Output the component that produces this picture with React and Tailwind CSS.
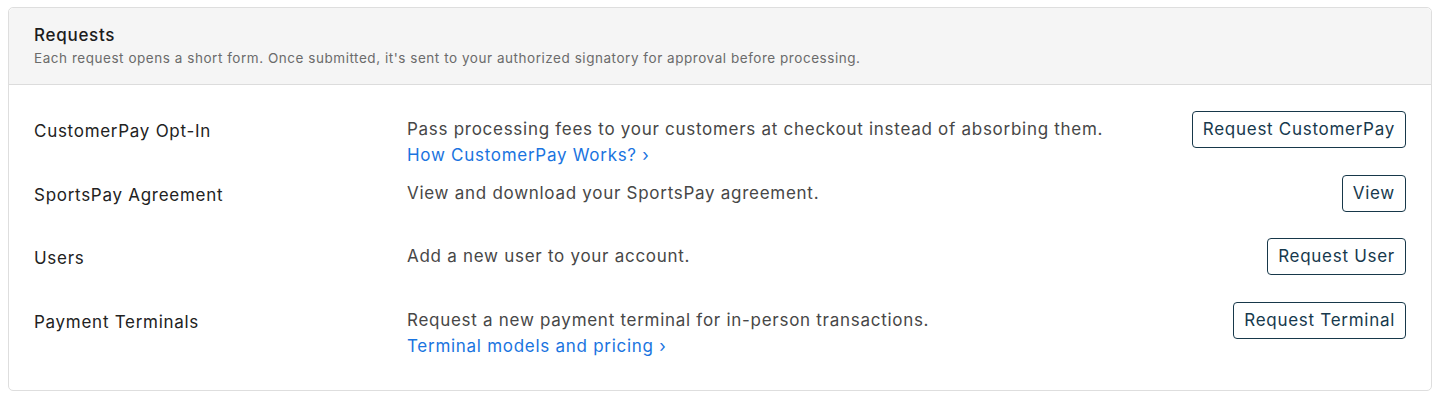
const requests = [
  {
    label: 'CustomerPay Opt-In',
    description: 'Pass processing fees to your customers at checkout instead of absorbing them.',
    link: 'How CustomerPay Works?',
    action: 'Request CustomerPay',
  },
  {
    label: 'SportsPay Agreement',
    description: 'View and download your SportsPay agreement.',
    action: 'View',
  },
  {
    label: 'Users',
    description: 'Add a new user to your account.',
    action: 'Request User',
  },
  {
    label: 'Payment Terminals',
    description: 'Request a new payment terminal for in-person transactions.',
    link: 'Terminal models and pricing',
    action: 'Request Terminal',
  },
];

export default function App() {
  return (
    <div className="min-h-screen bg-white pl-2 pr-[13px] pt-[7px] font-['Inter',sans-serif] tracking-[0.045em]">
      <div className="rounded-[5px] border border-[#dedede] bg-white">
        {/* Header */}
        <div className="rounded-t-[5px] border-b border-[#dcdcdc] bg-[#f5f5f5] px-[25px] pt-[15px] pb-[16px]">
          <h2 className="text-[17px] leading-6 font-medium text-[#1c1c1c]">Requests</h2>
          <p className="mt-px text-[13.5px] leading-5 text-[#6b6b6b] tracking-[0.04em]">
            Each request opens a short form. Once submitted, it's sent to your authorized signatory for approval before processing.
          </p>
        </div>

        {/* Rows */}
        <div className="px-[25px] pt-[26px] pb-[25px]">
          {requests.map((req) => (
            <div key={req.label} className="grid min-h-[63.5px] grid-cols-[373px_1fr_auto] items-start">
              <div className="pt-[7px] text-[17px] leading-[26px] text-[#222222]">{req.label}</div>
              <div className="pt-[5px] text-[17px] leading-[26px] text-[#474747]">
                <p>{req.description}</p>
                {req.link && (
                  <a href="#" className="block text-[#1a74e0]">
                    {req.link} ›
                  </a>
                )}
              </div>
              <button className="h-[37px] rounded-[4px] border border-[#17384a] px-[10px] text-[17px] leading-none text-[#17394d] hover:bg-[#f2f6f8]">
                {req.action}
              </button>
            </div>
          ))}
        </div>
      </div>
    </div>
  );
}
